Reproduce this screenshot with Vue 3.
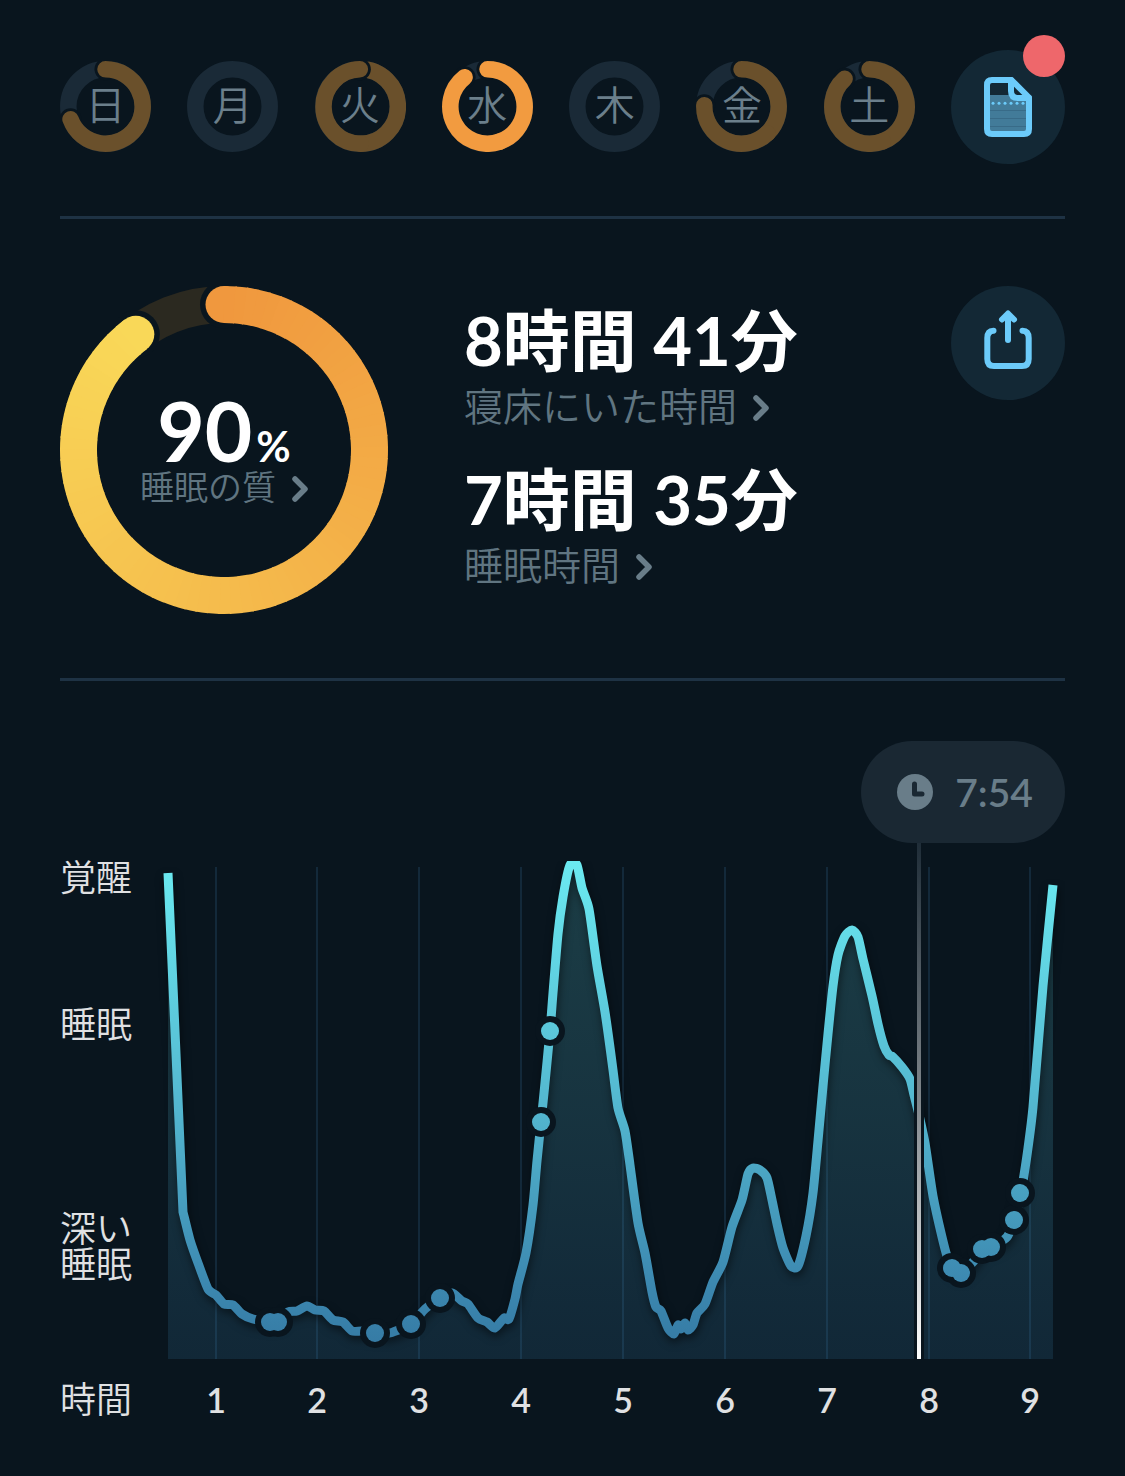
<template>
  <main class="page">
    <nav class="week">
      <button v-for="day in days" :key="day.name" type="button" class="day" :class="{ active: day.active }">
        <svg viewBox="0 0 91 91" class="dayRing" aria-hidden="true">
          <circle cx="45.5" cy="45.5" r="37.2" class="track" />
          <template v-if="day.end">
            <circle class="halo" r="11" v-bind="spot(45.5, 37.2, 0)" />
            <path class="arc" :d="arc(45.5, 37.2, 0, day.end / 2)" />
            <circle class="halo" r="11" v-bind="spot(45.5, 37.2, day.end)" />
            <path class="arc" :d="arc(45.5, 37.2, day.end / 2, day.end)" />
          </template>
        </svg>
        <span class="dayName">{{ day.name }}</span>
      </button>
      <button type="button" class="round" aria-label="ノート">
        <svg viewBox="0 0 48 60" width="48" height="60" aria-hidden="true">
          <rect x="5" y="18" width="38" height="38" fill="#427b99" />
          <path d="M6 33.5H42M6 41.5H42M6 49.5H42" stroke="#386b88" stroke-width="1" />
          <circle v-for="x in [9, 15, 21, 27, 33, 39]" :key="x" :cx="x" cy="26.3" r="1.5" fill="#6ccbfa" />
          <path d="M27 3V15L33 21H45L28 3Z" fill="#132835" />
          <path class="line" d="M27.5 3H8Q3 3 3 8V52Q3 57 8 57H40Q45 57 45 52V20.5Z" />
          <path class="line" d="M27 3V14Q27 21 34 21H45" />
        </svg>
        <span class="badge"></span>
      </button>
    </nav>

    <section class="summary">
      <div class="quality">
        <svg viewBox="0 0 328 328" class="qualityRing" aria-hidden="true">
          <circle cx="164" cy="164" r="145.5" class="bigTrack" />
          <circle class="halo" r="24" v-bind="spot(164, 145.5, 0)" />
          <circle class="halo" r="24" v-bind="spot(164, 145.5, qualityEnd)" />
          <circle r="18.5" :fill="mix(0)" v-bind="spot(164, 145.5, 0)" />
          <circle r="18.5" :fill="mix(1)" v-bind="spot(164, 145.5, qualityEnd)" />
          <path v-for="s in slices" :key="s.d" class="slice" :d="s.d" :stroke="s.color" />
        </svg>
        <div class="qualityText">
          <div class="score">90<span class="percent">%</span></div>
          <button type="button" class="more small">
            睡眠の質
            <svg class="chevron" viewBox="0 0 16 28" aria-hidden="true"><path d="M3 4L13 14L3 24" /></svg>
          </button>
        </div>
      </div>

      <div class="times">
        <div v-for="t in times" :key="t.label">
          <div class="duration">{{ t.value }}</div>
          <button type="button" class="more">
            {{ t.label }}
            <svg class="chevron" viewBox="0 0 16 28" aria-hidden="true"><path d="M3 4L13 14L3 24" /></svg>
          </button>
        </div>
      </div>

      <button type="button" class="round" aria-label="共有">
        <svg viewBox="0 0 48 66" width="48" height="66" aria-hidden="true">
          <path class="line" d="M9.5 20.7Q3.3 21 3.3 28V49Q3.3 56 10 56H38Q44.7 56 44.7 49V28Q44.7 21 38.5 20.7" />
          <path class="line" d="M24 7V30" />
          <path d="M18 9.5L24 3.5L30 9.5" class="line" />
        </svg>
      </button>
    </section>

    <section class="graph">
      <div class="pill">
        <svg viewBox="0 0 36 36" width="36" height="36" aria-hidden="true">
          <circle cx="18" cy="18" r="18" fill="#697d89" />
          <path d="M17.5 10V20H25" class="hands" />
        </svg>
        <time>7:54</time>
      </div>

      <svg viewBox="0 0 1005 590" class="chart" role="img" aria-label="睡眠グラフ">
        <defs>
          <linearGradient id="wave" gradientUnits="userSpaceOnUse" x1="0" y1="18" x2="0" y2="516">
            <stop offset="0" stop-color="#6beaf1" />
            <stop offset="0.5" stop-color="#53b6cf" />
            <stop offset="0.85" stop-color="#3c88b0" />
            <stop offset="1" stop-color="#3478a2" />
          </linearGradient>
          <linearGradient id="cursor" gradientUnits="userSpaceOnUse" x1="0" y1="0" x2="0" y2="516">
            <stop offset="0" stop-color="#1f2d38" />
            <stop offset="0.5" stop-color="#7f868b" />
            <stop offset="1" stop-color="#ffffff" />
          </linearGradient>
          <clipPath id="top"><rect x="0" y="18" width="1005" height="510" /></clipPath>
        </defs>

        <path v-for="h in hours" :key="h.label" class="grid" :d="`M${h.x} 24V516`" />
        <path :d="area" fill="url(#wave)" opacity="0.19" />
        <g clip-path="url(#top)">
          <path :d="curve" class="curve" />
        </g>
        <circle v-for="d in dots" :key="'h' + d[0]" class="halo" :cx="d[0]" :cy="d[1]" r="15" />
        <circle v-for="d in dots" :key="d[0]" fill="url(#wave)" :cx="d[0]" :cy="d[1]" r="9" />

        <rect x="854" y="18" width="10" height="498" class="halo" />
        <rect x="857" y="0" width="4" height="516" fill="url(#cursor)" />

        <text v-for="l in levels" :key="l.y" :y="l.y" class="level">
          <tspan v-for="(line, i) in l.lines" :key="line" x="0" :dy="i * 36">{{ line }}</tspan>
        </text>
        <text v-for="h in hours" :key="h.label" :x="h.x" y="570" class="hour">{{ h.label }}</text>
      </svg>
    </section>
  </main>
</template>

<script setup>
const days = [
  { name: '日', end: 250 },
  { name: '月', end: 0 },
  { name: '火', end: 359 },
  { name: '水', end: 322, active: true },
  { name: '木', end: 0 },
  { name: '金', end: 272 },
  { name: '土', end: 318 }
]

const times = [
  { value: '8時間 41分', label: '寝床にいた時間' },
  { value: '7時間 35分', label: '睡眠時間' }
]

// angles in degrees, clockwise from 12 o'clock
function point(c, r, deg) {
  const a = (deg * Math.PI) / 180
  return [(c + r * Math.sin(a)).toFixed(2), (c - r * Math.cos(a)).toFixed(2)]
}

function spot(c, r, deg) {
  const [cx, cy] = point(c, r, deg)
  return { cx, cy }
}

function arc(c, r, from, to) {
  const large = to - from > 180 ? 1 : 0
  return `M${point(c, r, from)}A${r} ${r} 0 ${large} 1 ${point(c, r, to)}`
}

const startColor = [240, 152, 62]
const endColor = [249, 216, 88]
function mix(t) {
  return `rgb(${startColor.map((v, i) => Math.round(v + (endColor[i] - v) * t))})`
}

// SVG has no conic gradient, so the ring is built from short arcs
const qualityEnd = 322.7
const count = 80
const slices = Array.from({ length: count }, (_, i) => {
  const step = qualityEnd / count
  return {
    d: arc(164, 145.5, i * step, Math.min((i + 1) * step + 0.5, qualityEnd)),
    color: mix(i / (count - 1))
  }
})

const hours = [156, 257, 359, 461, 563, 665, 767, 869, 970].map((x, i) => ({ x, label: i + 1 }))

const levels = [
  { lines: ['覚醒'], y: 48 },
  { lines: ['睡眠'], y: 195 },
  { lines: ['深い', '睡眠'], y: 399 },
  { lines: ['時間'], y: 570 }
]

const points = [
  [123, 369], [130, 397], [138, 420], [148, 446], [156, 452], [164, 461], [173, 462],
  [182, 471], [193, 476], [210, 479], [218, 478], [228, 469], [237, 468], [247, 463], [255, 467],
  [264, 468], [273, 477], [283, 479], [292, 488], [302, 488], [315, 490], [330, 490], [351, 481],
  [365, 466], [380, 455], [392, 450], [402, 458], [408, 461], [418, 475], [427, 479], [435, 485],
  [444, 475], [449, 476], [455, 456], [458, 441], [466, 410], [473, 362], [477, 318], [481, 279],
  [484, 250], [490, 188], [493, 150], [498, 91], [503, 54], [510, 22], [517, 22], [522, 45],
  [529, 66], [537, 123], [545, 169], [553, 227], [558, 265], [565, 288], [570, 322], [578, 380],
  [585, 410], [592, 449], [596, 464], [601, 468], [608, 485], [614, 491], [618, 482], [621, 486],
  [625, 480], [628, 487], [633, 482], [637, 470], [645, 461], [653, 439], [663, 419], [672, 384],
  [682, 357], [688, 331], [693, 325], [700, 327], [707, 335], [712, 357], [717, 381], [723, 405],
  [731, 423], [738, 423], [746, 393], [753, 350], [758, 298], [763, 243], [768, 191], [773, 143],
  [778, 112], [785, 93], [792, 87], [798, 94], [803, 116], [812, 153], [818, 181], [824, 203],
  [829, 212], [833, 214], [842, 224], [850, 236], [854, 252], [859, 272], [865, 300], [873, 353],
  [882, 394], [887, 413], [892, 424], [901, 430], [913, 419], [922, 407], [931, 404], [947, 394],
  [954, 377], [961, 350], [964, 332], [968, 305], [973, 264], [983, 143], [993, 42]
]

// loose Catmull-Rom spline, a larger divisor keeps more of the corners
function smooth(list) {
  let d = `${list[0]}`
  for (let i = 0; i < list.length - 1; i++) {
    const p0 = list[i - 1] || list[i]
    const p1 = list[i]
    const p2 = list[i + 1]
    const p3 = list[i + 2] || p2
    const a = p1.map((v, k) => (v + (p2[k] - p0[k]) / 9).toFixed(1))
    const b = p2.map((v, k) => (v - (p3[k] - p1[k]) / 9).toFixed(1))
    d += `C${a} ${b} ${p2}`
  }
  return d
}

const curve = `M108,30L${smooth(points)}`
const area = `${curve}V516H108Z`

const dots = [
  [210, 479], [218, 479], [315, 490], [351, 481], [380, 455], [481, 279], [490, 188],
  [892, 425], [901, 430], [922, 406], [931, 404], [954, 377], [960, 350]
]
</script>

<style>
body {
  margin: 0;
  background: #09151e;
}
</style>

<style scoped>
.page {
  min-height: 100vh;
  box-sizing: border-box;
  padding: 50px 60px 40px;
  background: #09151e;
  color: #fff;
  font-family: Lato, 'Noto Sans CJK JP', sans-serif;
}

button {
  padding: 0;
  border: none;
  background: none;
  color: inherit;
  font: inherit;
  cursor: pointer;
}

.week {
  display: flex;
  align-items: center;
  justify-content: space-between;
  padding-bottom: 52px;
  border-bottom: 3px solid #1e3244;
}

.day {
  display: grid;
  place-items: center;
  width: 91px;
  height: 92px;
}

.dayRing,
.dayName {
  grid-area: 1 / 1;
}

.dayRing {
  align-self: start;
  width: 91px;
  height: 91px;
}

.dayName {
  padding-bottom: 4px;
  color: #6b7f8b;
  font-size: 40px;
  font-weight: 350;
  line-height: 48px;
}

.track {
  fill: none;
  stroke: #1a2a37;
  stroke-width: 16.5;
}

.arc {
  fill: none;
  stroke: #6a502b;
  stroke-width: 16.5;
  stroke-linecap: round;
}

.active .arc {
  stroke: #f29b40;
}

.halo {
  fill: #09151e;
}

.round {
  position: relative;
  display: grid;
  place-items: center;
  flex: none;
  width: 114px;
  height: 114px;
  border-radius: 50%;
  background: #132835;
}

.badge {
  position: absolute;
  top: -15px;
  right: 0;
  width: 42px;
  height: 42px;
  border-radius: 50%;
  background: #ee676b;
}

.line {
  fill: none;
  stroke: #6ccbfa;
  stroke-width: 6;
  stroke-linecap: round;
  stroke-linejoin: round;
}

.summary {
  display: flex;
  align-items: flex-start;
  padding: 67px 0 64px;
  border-bottom: 3px solid #1e3244;
}

.quality {
  display: grid;
  place-items: center;
  flex: none;
}

.qualityRing,
.qualityText {
  grid-area: 1 / 1;
}

.qualityRing {
  display: block;
  width: 328px;
}

.bigTrack {
  fill: none;
  stroke: #2b2920;
  stroke-width: 37;
}

.slice {
  fill: none;
  stroke-width: 37;
}

.qualityText {
  display: flex;
  flex-direction: column;
  align-items: center;
  padding-bottom: 6px;
}

.score {
  font-size: 82px;
  font-weight: 700;
  line-height: 80px;
}

.percent {
  margin-left: 4px;
  font-size: 42px;
  line-height: 42px;
}

.more {
  display: flex;
  align-items: center;
  gap: 16px;
  color: #607581;
  font-size: 39px;
  font-weight: 350;
  line-height: 48px;
}

.more.small {
  font-size: 34px;
  line-height: 34px;
}

.chevron {
  width: 16px;
  height: 28px;
  margin-top: 4px;
}

.chevron path {
  fill: none;
  stroke: #697d89;
  stroke-width: 5.5;
  stroke-linecap: round;
  stroke-linejoin: round;
}

.times {
  display: flex;
  flex-direction: column;
  flex: 1;
  gap: 29px;
  padding: 14px 0 0 76px;
}

.duration {
  margin-bottom: 2px;
  font-size: 67px;
  font-weight: 700;
  line-height: 80px;
}

.graph {
  display: flex;
  flex-direction: column;
  align-items: flex-end;
  padding-top: 60px;
}

.pill {
  display: flex;
  align-items: center;
  gap: 22px;
  height: 102px;
  padding: 0 32px 0 36px;
  border-radius: 51px;
  background: #1a2833;
  color: #697d89;
  font-size: 39px;
  font-weight: 600;
}

.hands {
  fill: none;
  stroke: #1a2833;
  stroke-width: 5;
  stroke-linecap: round;
  stroke-linejoin: round;
}

.chart {
  display: block;
  width: 100%;
}

.grid {
  stroke: #13293a;
  stroke-width: 2;
}

.curve {
  fill: none;
  stroke: url(#wave);
  stroke-width: 9;
  filter: drop-shadow(1px 4px 4px rgba(0, 0, 0, 0.5));
}

.level,
.hour {
  fill: #e0e1e3;
}

.level {
  font-size: 36px;
  font-weight: 350;
}

.hour {
  font-size: 34px;
  font-weight: 600;
  text-anchor: middle;
}
</style>
